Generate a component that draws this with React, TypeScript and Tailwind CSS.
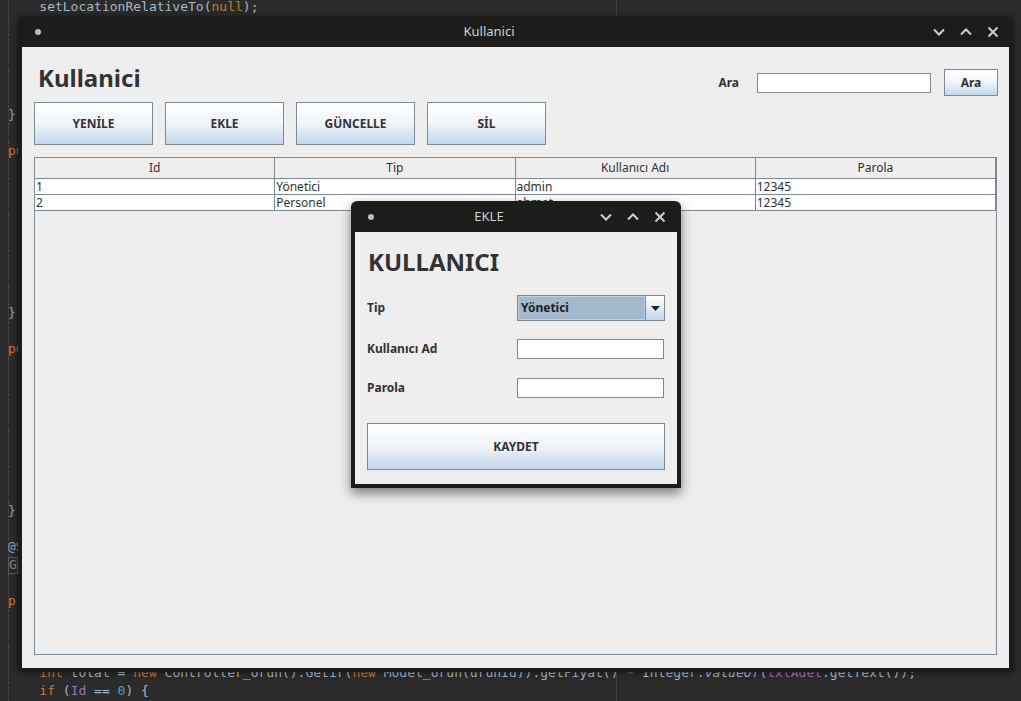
import React from 'react';

type Seg = [string, string];

const K = 'text-[#cc7832]';
const T = 'text-[#a9b7c6]';
const N = 'text-[#6897bb]';
const F = 'text-[#9876aa]';
const B = 'text-[#7ba3d0]';

// editor lines behind the windows, 18px each
const code: Record<number, Seg[]> = {
  0: [['    setLocationRelativeTo(', T], ['null', K], [');', T]],
  6: [['}', B]],
  8: [['public', K], [' void formWindowOpened(', T]],
  17: [['}', B]],
  19: [['public', K], [' void tabloDoldur() {', T]],
  28: [['}', B]],
  30: [['@SuppressWarnings("unchecked")', B]],
  33: [['private', K], [' void btnKaydetActionPerformed(', T]],
  37: [
    ['    ', T],
    ['int', K],
    [' total = ', T],
    ['new', K],
    [' Controller_Urun().Getir(', T],
    ['new', K],
    [' Model_Urun(urunId)).getFiyat() * Integer.', T],
    ['valueOf', T + ' italic'],
    ['(', T],
    ['txtAdet', F],
    ['.getText());', T],
  ],
  38: [['    ', T], ['if', K], [' (', T], ['Id', F], [' == ', T], ['0', N], [') {', T]],
};

function Editor() {
  const lines = Array.from({ length: 40 }, (_, i) => i);
  return (
    <div className="-mt-[2px] flex flex-col font-['DejaVu_Sans_Mono','Liberation_Mono',monospace] text-[13px]">
      {lines.map((i) => (
        <div
          key={i}
          className="ml-2 h-[18px] whitespace-pre border-l border-dotted border-[#4e4e4e] leading-[18px]"
        >
          {i === 31 ? (
            <span className="-ml-px inline-flex h-[17px] w-[10px] items-center justify-center border border-[#5a5a5a] text-[#8a8a8a]">
              G
            </span>
          ) : (
            <span className="-ml-px">
              {(code[i] || []).map(([t, c], j) => (
                <span key={j} className={c}>
                  {t}
                </span>
              ))}
            </span>
          )}
        </div>
      ))}
    </div>
  );
}

function Chevron({ up }: { up?: boolean }) {
  return (
    <svg width="12" height="12" viewBox="0 0 12 12" fill="none" stroke="#cfcfcf" strokeWidth="2">
      {up ? <polyline points="1,8.5 6,3.5 11,8.5" /> : <polyline points="1,3.5 6,8.5 11,3.5" />}
    </svg>
  );
}

function Cross() {
  return (
    <svg width="12" height="12" viewBox="0 0 12 12" fill="none" stroke="#cfcfcf" strokeWidth="2">
      <line x1="1.5" y1="1.5" x2="10.5" y2="10.5" />
      <line x1="10.5" y1="1.5" x2="1.5" y2="10.5" />
    </svg>
  );
}

function TitleBar({ title, h, left, right }: { title: string; h: string; left: string; right: string }) {
  return (
    <div className={`flex shrink-0 items-center ${h}`}>
      <div className={`flex items-center pl-[17px] ${left}`}>
        <span className="size-[6px] rounded-full bg-[#bdbdbd]" />
      </div>
      <div className="flex-1 text-center text-[13px] text-[#d0d0d0]">{title}</div>
      <div className={`flex items-center gap-[15px] ${right}`}>
        <Chevron />
        <Chevron up />
        <Cross />
      </div>
    </div>
  );
}

const btn =
  'border border-[#7a8a99] bg-linear-to-b from-white via-[#f0f5fa] to-[#c3d6ea] text-[12px] font-bold text-[#333]';

function Table() {
  const head = ['Id', 'Tip', 'Kullanıcı Adı', 'Parola'];
  const rows = [
    ['1', 'Yönetici', 'admin', '12345'],
    ['2', 'Personel', 'ahmet', '12345'],
  ];
  return (
    <div className="mt-3 flex-1 border border-[#7a8a99] bg-[#eeeeee]">
      <div className="grid grid-cols-4 border-b border-[#7a8a99]">
        {head.map((h) => (
          <div key={h} className="h-[20px] border-r border-[#7a8a99] text-center text-[12px] leading-[20px] text-[#333]">
            {h}
          </div>
        ))}
      </div>
      {rows.map((r) => (
        <div key={r[0]} className="grid grid-cols-4 border-b border-[#7a8a99] bg-white">
          {r.map((c, j) => (
            <div key={j} className="h-[15px] border-r border-[#7a8a99] pl-px text-[12px] leading-[15px] text-[#333]">
              {c}
            </div>
          ))}
        </div>
      ))}
    </div>
  );
}

export default function App() {
  return (
    <div className="relative h-[701px] w-[1021px] overflow-hidden bg-[#2b2b2b] font-['Noto_Sans','Open_Sans',sans-serif]">
      <Editor />
      <div className="absolute left-[616px] top-0 h-full w-px bg-[#404040]" />

      {/* main window */}
      <div className="absolute left-[18px] top-[17px] flex h-[655px] w-[995px] flex-col rounded-t-[6px] bg-[#1c1d1b] shadow-[0_0_6px_rgba(0,0,0,0.6)]">
        <TitleBar title="Kullanici" h="h-[30px]" left="w-[35px]" right="w-[88px] pl-[8px]" />
        <div className="mx-1 mb-1 flex flex-1 flex-col bg-[#eeeeee] px-3 pb-[13px] text-[#333]">
          <div className="flex h-[55px] items-start justify-between">
            <h1 className="ml-1 mt-[14px] text-[24px] font-bold leading-[33px]">Kullanici</h1>
            <div className="-mr-px mt-[22px] flex items-center">
              <span className="text-[12px] font-bold">Ara</span>
              <div className="ml-[18px] h-[20px] w-[174px] border border-[#7a8a99] bg-white" />
              <button className={`ml-[13px] h-[27px] w-[54px] ${btn}`}>Ara</button>
            </div>
          </div>
          <div className="flex gap-3">
            {['YENİLE', 'EKLE', 'GÜNCELLE', 'SİL'].map((b) => (
              <button key={b} className={`h-[43px] w-[119px] ${btn}`}>
                {b}
              </button>
            ))}
          </div>
          <Table />
        </div>
      </div>

      {/* EKLE dialog */}
      <div className="absolute left-[351px] top-[201px] flex h-[287px] w-[330px] flex-col rounded-t-[6px] bg-[#1c1d1b] shadow-[0_5px_12px_rgba(0,0,0,0.5)]">
        <TitleBar title="EKLE" h="h-[31px]" left="w-[30px]" right="w-[84px] pl-[3px]" />
        <div className="mx-1 mb-1 flex flex-1 flex-col bg-[#eeeeee] px-3 text-[12px] font-bold text-[#333]">
          <h2 className="ml-px mt-[13px] text-[24px] leading-[33px]">KULLANICI</h2>
          <div className="mt-[17px] flex h-[26px] items-center justify-between">
            <span>Tip</span>
            <div className="flex h-[26px] w-[148px] border border-[#7a8a99]">
              <div className="flex flex-1 items-center border border-[#c3d0dc] bg-[#a3b8cc] pl-[2px] text-[#222]">
                Yönetici
              </div>
              <div className="flex w-[19px] items-center justify-center border-l border-[#7a8a99] bg-linear-to-b from-white to-[#c3d6ea]">
                <svg width="9" height="5" viewBox="0 0 9 5">
                  <polygon points="0,0 9,0 4.5,5" fill="#222" />
                </svg>
              </div>
            </div>
          </div>
          <div className="mt-[18px] flex h-[20px] items-center justify-between">
            <span>Kullanıcı Ad</span>
            <div className="mr-px h-[20px] w-[147px] border border-[#7a8a99] bg-white" />
          </div>
          <div className="mt-[19px] flex h-[20px] items-center justify-between">
            <span>Parola</span>
            <div className="mr-px h-[20px] w-[147px] border border-[#7a8a99] bg-white" />
          </div>
          <button className={`mt-[25px] h-[47px] w-full ${btn}`}>KAYDET</button>
        </div>
      </div>
    </div>
  );
}
